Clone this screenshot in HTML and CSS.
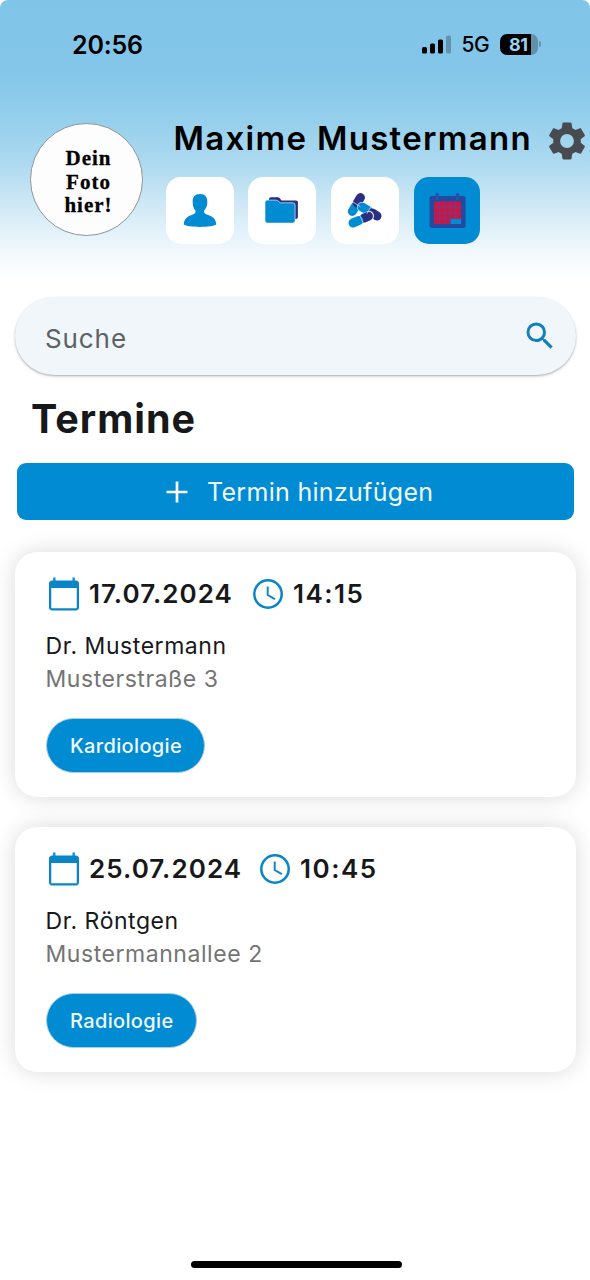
FILE: index.html
```html
<!DOCTYPE html>
<html lang="de">
<head>
<meta charset="utf-8">
<meta name="viewport" content="width=device-width">
<title>Termine</title>
<link rel="stylesheet" href="styles.css">
</head>
<body>
<svg class="defs" width="0" height="0" aria-hidden="true">
  <symbol id="calendar" viewBox="0 0 24 24"><path fill="currentColor" d="M20 3h-.8V1h-1.5v2H6.300V1H4.800v2H4c-1.100 0-2 .9-2 2v16c0 1.100.9 2 2 2h16c1.100 0 2-.9 2-2V5c0-1.100-.9-2-2-2zm.5 18.500h-17V8h17v13.500z"/></symbol>
  <symbol id="clock" viewBox="0 0 24 24"><circle cx="12" cy="12" r="9.150" fill="none" stroke="currentColor" stroke-width="1.700"/><path d="M11.800 7v5.700l4.800 2.700" fill="none" stroke="currentColor" stroke-width="1.300"/></symbol>
</svg>
<div class="screen">
  <header class="header">
    <div class="status">
      <span class="status-time">20:56</span>
      <div class="status-right">
        <svg class="signal" width="29" height="19" viewBox="0 0 29 19"><rect x="0" y="12" width="5" height="6.500" rx="1.500"/><rect x="8" y="8.500" width="5" height="10" rx="1.500"/><rect x="16" y="4.500" width="5" height="14" rx="1.500"/><rect x="24" y="0.500" width="5" height="18" rx="1.500" opacity=".25"/></svg>
        <span class="network">5G</span>
        <div class="battery"><span class="battery-level">81</span></div>
        <span class="battery-tip"></span>
      </div>
    </div>
    <div class="profile">
      <div class="avatar">Dein<br>Foto<br>hier!</div>
      <div class="profile-main">
        <div class="name-row">
          <span class="name">Maxime Mustermann</span>
          <svg class="gear" width="46" height="46" viewBox="0 0 24 24"><path fill="#474a50" d="M19.140 12.940c.04-.3.06-.61.06-.94 0-.32-.02-.64-.07-.94l2.030-1.580c.18-.14.23-.41.12-.61l-1.920-3.320c-.12-.22-.37-.29-.59-.22l-2.390.96c-.5-.38-1.030-.7-1.620-.94l-.36-2.540c-.04-.24-.24-.41-.48-.41h-3.840c-.24 0-.43.17-.47.41l-.36 2.540c-.59.24-1.130.57-1.620.94l-2.390-.96c-.22-.08-.47 0-.59.22L2.740 8.870c-.12.21-.08.47.12.61l2.030 1.580c-.05.3-.09.63-.09.94s.02.64.07.94l-2.030 1.580c-.18.14-.23.41-.12.61l1.920 3.320c.12.22.37.29.59.22l2.390-.96c.5.38 1.030.7 1.620.94l.36 2.540c.05.24.24.41.48.41h3.840c.24 0 .44-.17.47-.41l.36-2.540c.59-.24 1.130-.56 1.620-.94l2.390.96c.22.08.47 0 .59-.22l1.920-3.320c.12-.22.07-.47-.12-.61l-2.010-1.580zM12 15.600A3.600 3.600 0 1 1 12 8.400a3.600 3.600 0 0 1 0 7.200z"/></svg>
        </div>
        <nav class="tabs">
          <div class="tab"><svg width="68" height="68" viewBox="0 0 68 68"><path fill="#018bd3" d="M34 17c-5.300 0-7.500 3.500-7.300 8 0 4.500 1.200 6.500 2.600 8.500.9 2-.2 3.200-3.200 4.200C21 39.500 18 42 17.800 47.500c3.500 3.200 28.900 3.200 32.400 0-.2-5.500-3.200-8-8.700-9.800-3-1-4.100-2.200-3.200-4.200 1.500-2 3-4 3-8.500.2-4.500-2-8-7.300-8z"/></svg></div>
          <div class="tab"><svg width="68" height="68" viewBox="0 0 68 68"><path fill="#2b2f83" d="M21 22q0-1.800 1.800-1.800h7.200q1.200 0 2 1.200l1.500 2h14.500q1.900 0 1.900 1.700v15q0 1.900-1.900 1.900H45V27H21z"/><path fill="#018bd3" stroke="#fff" stroke-width=".6" d="M17 25.500q0-2.400 2.400-2.400h8.400q1.300 0 2.200.9l2.500 1.800h12.400q2.200 0 2.200 2.200v15.700q0 2.400-2.400 2.400H19.400q-2.400 0-2.400-2.400z"/></svg></div>
          <div class="tab"><svg width="68" height="68" viewBox="0 0 68 68" stroke-linecap="round" fill="none"><path stroke="#018bd3" stroke-width="9" d="M21.300 34.500l3-5"/><path stroke="#2b2f83" stroke-width="9" d="M29.500 20.500l-3.300 5.500"/><path stroke="#fff" stroke-width="10" d="M31 30l15 8.500"/><path stroke="#018bd3" stroke-width="9" d="M31 30l6 3.400"/><path stroke="#2b2f83" stroke-width="9" d="M41.500 36l4.500 3"/><path stroke="#fff" stroke-width="10" d="M22 46l16-7"/><path stroke="#2b2f83" stroke-width="9" d="M33 41.200l4.500-2"/><path stroke="#018bd3" stroke-width="9" d="M22 46l6-2.600"/><path stroke="#fff" stroke-width=".6" d="M22 25l7 4.500M39.500 30.500l-3.500 6M29 38.500l3.500 8"/></svg></div>
          <div class="tab tab-active"><svg width="66" height="68" viewBox="0 0 66 68"><path fill="#224aa0" d="M18 19h31q2.500 0 2.500 2.500v27q0 2.500-2.500 2.500H18q-2.500 0-2.500-2.500v-27Q15.500 19 18 19z"/><path fill="#c81747" d="M20 24.500h27v18H36v4.500H20z"/><path fill="#018bd3" d="M36.500 42h10.500v5H36.500z"/><path stroke="#5a489a" stroke-width=".7" fill="none" d="M20 30h27M20 36h27M20 41.700h27M25.500 24.500v22.500M30.800 24.500v22.500M36 24.500v22.500M41.500 24.500v17"/><path stroke="#2256aa" stroke-width="3.500" stroke-linecap="round" d="M23 17.500v4M43.500 17.500v4"/></svg></div>
        </nav>
      </div>
    </div>
  </header>
  <main class="content">
    <div class="search">
      <span class="search-label">Suche</span>
      <svg class="search-icon" width="36" height="36" viewBox="0 0 24 24"><path fill="#1180bd" d="M15.500 14h-.79l-.28-.27A6.471 6.471 0 0 0 16 9.500 6.500 6.500 0 1 0 9.500 16c1.610 0 3.090-.59 4.230-1.570l.27.28v.79l5 4.990L20.490 19l-4.990-5zm-6 0C7.010 14 5 11.990 5 9.500S7.010 5 9.500 5 14 7.010 14 9.500 11.990 14 9.500 14z"/></svg>
    </div>
    <h1 class="title">Termine</h1>
    <div class="add"><svg width="22" height="22" viewBox="0 0 22 22"><path d="M11 .5v21M.5 11h21" stroke="#fff" stroke-width="2.700"/></svg><span class="add-label">Termin hinzufügen</span></div>
    <section class="card">
      <div class="when"><svg class="icon" width="36" height="36"><use href="#calendar"/></svg><span class="date date-first">17.07.2024</span><svg class="icon icon-clock" width="36" height="36"><use href="#clock"/></svg><span class="time">14:15</span></div>
      <div class="doctor">Dr. Mustermann</div>
      <div class="street">Musterstraße 3</div>
      <span class="chip">Kardiologie</span>
    </section>
    <section class="card">
      <div class="when"><svg class="icon" width="36" height="36"><use href="#calendar"/></svg><span class="date date-second">25.07.2024</span><svg class="icon icon-clock" width="36" height="36"><use href="#clock"/></svg><span class="time">10:45</span></div>
      <div class="doctor">Dr. Röntgen</div>
      <div class="street">Mustermannallee 2</div>
      <span class="chip">Radiologie</span>
    </section>
  </main>
  <div class="home-bar"></div>
</div>
</body>
</html>
```
FILE: styles.css
```css
* { box-sizing: border-box; }
body { margin: 0; background: #fff; font-family: Inter, "Liberation Sans", sans-serif; color: #17181a; }
svg { display: block; flex: none; }
.defs { position: absolute; }
.screen { width: 590px; height: 1280px; display: flex; flex-direction: column; overflow: hidden; white-space: nowrap; background: #fff; }
.header { height: 281px; flex: none; border-radius: 8px 8px 0 0; background: linear-gradient(#80c4e8 0, #83c6e9 70px, #95cfec 120px, #aedaf0 165px, #d3eaf6 210px, #f0f8fc 250px, #fff 281px); color: #000; }
.status { height: 88px; padding: 0 49px 0 72px; display: flex; align-items: center; justify-content: space-between; }
.status-time { font-size: 25px; font-weight: 600; letter-spacing: -0.2px; padding-top: 1px; }
.status-right { display: flex; align-items: center; }
.signal { margin-right: 1px; }
.network { margin-left: 10px; font-size: 21px; font-weight: 500; letter-spacing: -0.6px; padding-top: 1px; }
.battery { width: 38px; height: 21px; margin-left: 11px; border-radius: 7px; background: linear-gradient(90deg, #000 31px, #6292aa 31px); display: flex; align-items: center; }
.battery-level { width: 38px; padding-left: 9px; color: #9bd2ee; font-size: 18px; font-weight: 700; line-height: 21px; letter-spacing: -0.5px; }
.battery-tip { width: 2px; height: 6px; margin-left: 1px; border-radius: 0 3px 3px 0; background: #6292aa; }
.profile { display: flex; padding-left: 30px; }
.avatar { width: 113px; height: 113px; flex: none; margin-top: 35px; padding: 23px 0 0 4px; border: 1.500px solid #8f9498; border-radius: 50%; background: #fdfdfd; text-align: center; font: 700 21px/23.500px "Liberation Serif", serif; letter-spacing: 1px; -webkit-text-stroke: .3px #000; }
.profile-main { margin-left: 22.500px; padding-top: 30px; }
.name-row { height: 46px; display: flex; align-items: center; justify-content: space-between; width: 424.500px; padding-left: 8px; }
.name { font-size: 33px; font-weight: 600; letter-spacing: 1.300px; padding-bottom: 6px; }
.tabs { display: flex; gap: 14.700px; margin-top: 13px; }
.tab { width: 68px; height: 67px; border-radius: 15px; background: #fff; overflow: hidden; }
.tab-active { width: 66px; background: #018bd3; }
.content { padding: 16px 14px 0 15px; }
.search { height: 78px; padding: 0 18px 0 30px; border-radius: 39px; background: #f0f6f9; box-shadow: 0 1px 2px rgba(0,0,0,.28), 0 2px 4px rgba(0,0,0,.07); display: flex; align-items: center; justify-content: space-between; }
.search-label { color: #5d6265; font-size: 26px; letter-spacing: .9px; padding-top: 5px; }
.title { margin: 20px 0 0 16px; font-size: 39.500px; line-height: 48px; font-weight: 700; letter-spacing: 1px; }
.add { height: 57px; margin: 20px 2px 32px 2px; border-radius: 9px; background: #018bd3; color: #f0f9fe; display: flex; align-items: center; padding-left: 149px; gap: 19px; }
.add-label { font-size: 25px; font-weight: 400; letter-spacing: .3px; }
.card { height: 245px; margin-bottom: 30px; padding: 22px 31px 0; border-radius: 22px; background: #fff; box-shadow: 0 0 22px rgba(0,0,0,.15); }
.when { height: 40px; display: flex; align-items: center; }
.icon { color: #0985c8; }
.date, .time { font-size: 26px; font-weight: 600; padding-bottom: 2px; }
.date { margin-left: 7px; letter-spacing: 1.050px; }
.date-first { width: 144px; }
.date-second { width: 151px; }
.icon-clock { margin-left: 17px; }
.time { margin-left: 7px; letter-spacing: 1.500px; }
.doctor, .street { margin-left: -0.500px; font-size: 23px; line-height: 33px; letter-spacing: .55px; }
.doctor { margin-top: 16px; }
.street { color: #747474; }
.chip { display: inline-flex; height: 55px; align-items: center; margin-top: 22px; padding: 0 22px 0 23px; border: 1.500px solid #a9cfe2; border-radius: 28px; background: #018bd3; color: #f0f9fe; font-size: 20px; font-weight: 500; letter-spacing: .35px; }
.home-bar { width: 211px; height: 7px; margin: auto 0 12px 190.500px; border-radius: 4px; background: #000; }
```
